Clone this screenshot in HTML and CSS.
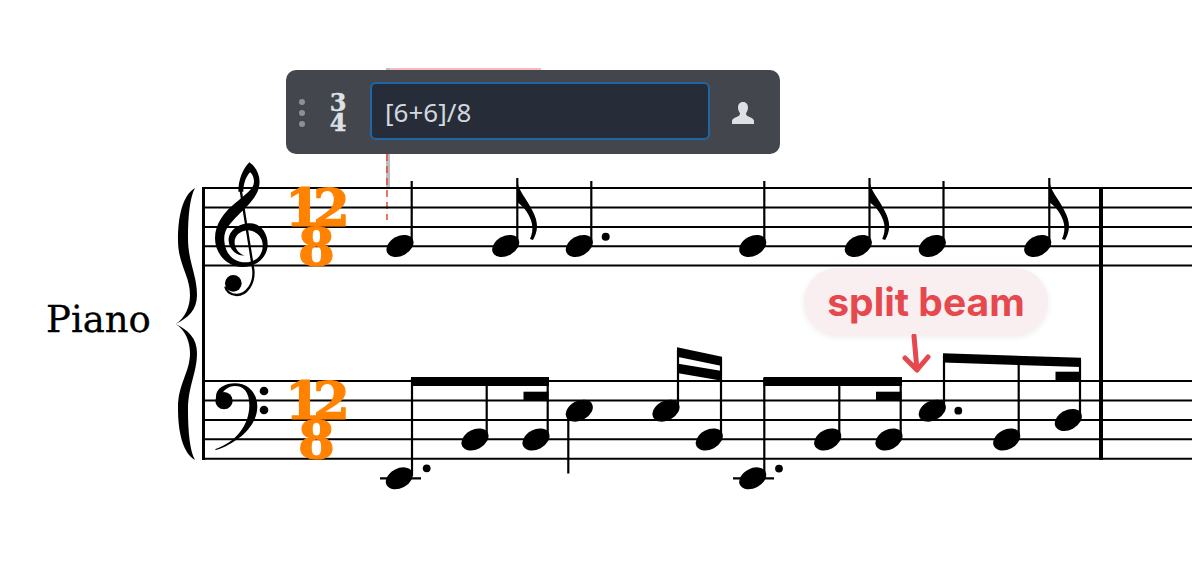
FILE: index.html
```html
<!DOCTYPE html>
<html lang="en">
<head>
    <meta charset="UTF-8">
    <meta name="viewport" content="width=device-width, initial-scale=1.0">
    <title>Time signature popover</title>
    <link rel="stylesheet" href="styles.css">
</head>
<body>
    <div class="stage">
        <svg class="score" viewBox="0 0 1192 578" width="1192" height="578">
            <defs>
                <ellipse id="head" rx="14.4" ry="9.8" transform="rotate(-28)"/>
                <path id="flag" d="M0,0 C1,8 2,10 6,17 C13,28 20,38 20,48 C20,54 18,58 16,62 L13,61 C15,56 16,52 15,46 C13,36 6,28 0,24 Z"/>
                <path id="brace-half" d="M195,188 C190,197 188,215 188,238 C188,262 197,275 197,295 C197,310 188,318 175.5,324 C186,318 190,305 190,295 C190,275 178,265 178,240 C178,215 183,195 195,188 Z"/>
            </defs>

            <!-- selection marker behind the popover -->
            <rect class="marker-pink" x="386" y="68" width="155" height="3"/>
            <rect class="marker-grey" x="386" y="68" width="4" height="119"/>
            <line class="marker-dash" x1="387" y1="154" x2="387" y2="220"/>

            <!-- staves -->
            <g class="staff">
                <line x1="203" y1="188" x2="1192" y2="188"/>
                <line x1="203" y1="207.6" x2="1192" y2="207.6"/>
                <line x1="203" y1="227" x2="1192" y2="227"/>
                <line x1="203" y1="246.3" x2="1192" y2="246.3"/>
                <line x1="203" y1="265.6" x2="1192" y2="265.6"/>
                <line x1="203" y1="381" x2="1192" y2="381"/>
                <line x1="203" y1="400.6" x2="1192" y2="400.6"/>
                <line x1="203" y1="420" x2="1192" y2="420"/>
                <line x1="203" y1="439.3" x2="1192" y2="439.3"/>
                <line x1="203" y1="458.8" x2="1192" y2="458.8"/>
            </g>
            <rect x="202" y="187" width="3" height="273"/>
            <rect x="1099" y="187" width="4" height="273"/>

            <!-- brace -->
            <use href="#brace-half"/>
            <use href="#brace-half" transform="matrix(1 0 0 -1 0 648)"/>

            <text class="instrument" x="46" y="332">Piano</text>

            <!-- treble clef -->
            <g transform="translate(170 155) scale(0.3333)">
                <path d="M238,22 C258,35 272,62 268,90 C264,125 232,152 205,180 C180,205 160,225 163,258 C165,295 190,322 225,322 C260,322 280,298 278,268 C276,240 252,225 232,226 C208,228 192,245 194,265 C196,285 210,298 224,302 C200,302 178,285 176,258 C174,228 205,205 240,205 C272,205 294,235 293,270 C292,308 258,336 218,336 C170,336 135,295 135,250 C135,205 165,170 195,145 C225,118 252,102 252,80 C252,65 245,55 240,52 C228,65 220,85 220,110 L205,110 C205,75 218,42 238,22 Z"/>
                <path class="clef-stem" d="M212,105 L250,345 C254,385 230,420 200,420 C180,420 168,408 166,395"/>
                <circle cx="190" cy="385" r="25"/>
            </g>

            <!-- bass clef -->
            <g transform="translate(160 310) scale(0.3333)">
                <path d="M165,418 C230,395 268,345 268,285 C268,245 250,228 225,228 C205,228 190,240 180,262 L168,265 C165,235 195,220 225,220 C265,220 292,250 292,290 C292,350 230,400 168,420 Z"/>
                <circle cx="192" cy="272" r="26"/>
                <circle cx="312" cy="243" r="13"/>
                <circle cx="312" cy="300" r="13"/>
            </g>

            <!-- time signatures -->
            <g class="timesig">
                <text class="tight" x="285" y="226">12</text>
                <text x="298" y="265">8</text>
                <text class="tight" x="285" y="419">12</text>
                <text x="298" y="458">8</text>
            </g>

            <!-- treble notes -->
            <g class="stems">
                <line x1="411.7" y1="181" x2="411.7" y2="243"/>
                <line x1="517.3" y1="178" x2="517.3" y2="243"/>
                <line x1="591.3" y1="181" x2="591.3" y2="243"/>
                <line x1="764.3" y1="181" x2="764.3" y2="243"/>
                <line x1="869.5" y1="178" x2="869.5" y2="243"/>
                <line x1="943.5" y1="181" x2="943.5" y2="243"/>
                <line x1="1049.3" y1="178" x2="1049.3" y2="243"/>
            </g>
            <use href="#head" x="400" y="246"/>
            <use href="#head" x="505.7" y="246"/>
            <use href="#head" x="579.3" y="246"/>
            <use href="#head" x="752.7" y="246"/>
            <use href="#head" x="858.3" y="246"/>
            <use href="#head" x="932.3" y="246"/>
            <use href="#head" x="1037.7" y="246"/>
            <use href="#flag" x="517" y="178"/>
            <use href="#flag" x="869.2" y="178"/>
            <use href="#flag" x="1049" y="178"/>
            <circle cx="605.7" cy="236.7" r="4"/>

            <!-- bass notes -->
            <g class="stems">
                <line x1="412" y1="378" x2="412" y2="476"/>
                <line x1="486.7" y1="380" x2="486.7" y2="437"/>
                <line x1="547.7" y1="380" x2="547.7" y2="437"/>
                <line x1="568.3" y1="410" x2="568.3" y2="473.5"/>
                <line x1="678" y1="350" x2="678" y2="408"/>
                <line x1="721" y1="358" x2="721" y2="437"/>
                <line x1="764.3" y1="378" x2="764.3" y2="475"/>
                <line x1="839.3" y1="380" x2="839.3" y2="437"/>
                <line x1="900.7" y1="380" x2="900.7" y2="437"/>
                <line x1="944" y1="355" x2="944" y2="408"/>
                <line x1="1018.7" y1="358" x2="1018.7" y2="437"/>
                <line x1="1080" y1="360" x2="1080" y2="417"/>
                <line x1="380" y1="478.4" x2="421" y2="478.4"/>
                <line x1="733" y1="478.4" x2="774" y2="478.4"/>
            </g>
            <use href="#head" x="399.3" y="478.3"/>
            <use href="#head" x="475" y="439.5"/>
            <use href="#head" x="536" y="439.5"/>
            <use href="#head" x="579.3" y="410.7"/>
            <use href="#head" x="666" y="410.7"/>
            <use href="#head" x="709.3" y="439.5"/>
            <use href="#head" x="752.7" y="478.3"/>
            <use href="#head" x="827.7" y="439.5"/>
            <use href="#head" x="889" y="439.5"/>
            <use href="#head" x="932.3" y="410.7"/>
            <use href="#head" x="1006.7" y="439.5"/>
            <use href="#head" x="1068.3" y="420"/>
            <circle cx="426.7" cy="468.3" r="3.9"/>
            <circle cx="779" cy="468.6" r="3.9"/>
            <circle cx="958.3" cy="410.7" r="3.9"/>

            <!-- beams -->
            <rect x="411" y="377" width="138" height="9"/>
            <rect x="523.5" y="391.7" width="25" height="8.5"/>
            <polygon points="677,347.3 722,356.7 722,366 677,356.8"/>
            <polygon points="677,363.5 722,371 722,380.7 677,373"/>
            <rect x="763.5" y="377" width="138.5" height="9"/>
            <rect x="876" y="391.7" width="25.5" height="8.5"/>
            <polygon points="943,353.3 1081,357.7 1081,367 943,362.6"/>
            <rect x="1055.5" y="371.7" width="25" height="8.5"/>
        </svg>

        <div class="toolbar">
            <div class="grip"><span></span><span></span><span></span></div>
            <div class="sig-icon"><span>3</span><span>4</span></div>
            <div class="sig-input">[6+6]/8</div>
            <svg class="person" viewBox="0 0 22 22" width="22" height="22">
                <path d="M11,0 C14.5,0 16,2.6 16,5.6 C16,8 15,10 14,11.2 C14,13 15,14 17.5,15 C20,16 22,17 22,19 L22,22 L0,22 L0,19 C0,17 2,16 4.5,15 C7,14 8,13 8,11.2 C7,10 6,8 6,5.6 C6,2.6 7.5,0 11,0 Z"/>
            </svg>
        </div>

        <div class="callout">split beam</div>
        <svg class="callout-arrow" viewBox="0 0 32 40" width="32" height="40">
            <path d="M14,2 L17,36 M5,24 L17,36 L28,23"/>
        </svg>
    </div>
</body>
</html>
```

FILE: styles.css
```css
html, body {
    margin: 0;
    background: #fff;
}

.stage {
    position: relative;
    width: 1192px;
    height: 578px;
    overflow: hidden;
}

.score {
    display: block;
}

/* Score parts */
.staff line {
    stroke: #000;
    stroke-width: 2;
}

.stems line {
    stroke: #000;
    stroke-width: 2.2;
}

.clef-stem {
    fill: none;
    stroke: #000;
    stroke-width: 7;
}

.instrument {
    font-family: "DejaVu Serif", serif;
    font-size: 37px;
    fill: #000;
    stroke: #000;
    stroke-width: 0.3;
}

.timesig text {
    font-family: "DejaVu Serif", serif;
    font-size: 53px;
    font-weight: 700;
    fill: #ff8200;
    stroke: #ff8200;
    stroke-width: 1.2;
}

.timesig .tight {
    letter-spacing: -9px;
}

.marker-pink {
    fill: #f9b9bd;
}

.marker-grey {
    fill: #bdbdbd;
}

.marker-dash {
    stroke: #e5482d;
    stroke-width: 1.5;
    stroke-dasharray: 7 5;
}

/* Popover over the score */
.toolbar {
    position: absolute;
    left: 286px;
    top: 70px;
    width: 494px;
    height: 84px;
    box-sizing: border-box;
    padding: 12px 26px 14px 12px;
    display: flex;
    align-items: center;
    background: #43464c;
    border-radius: 10px;
}

.grip {
    display: flex;
    flex-direction: column;
    gap: 5px;
    width: 8px;
    margin: 3px 0 0 1px;
}

.grip span {
    width: 6px;
    height: 6px;
    border-radius: 50%;
    background: #8d9095;
}

.sig-icon {
    display: flex;
    flex-direction: column;
    align-items: center;
    width: 20px;
    margin: 4px 0 0 21px;
    font-family: "DejaVu Serif", serif;
    font-size: 24px;
    font-weight: 700;
    line-height: 20px;
    color: #dde1e6;
    -webkit-text-stroke: 0.4px #dde1e6;
}

.sig-input {
    flex: 1;
    height: 58px;
    margin: 0 22px 0 22px;
    padding: 1px 0 0 13px;
    box-sizing: border-box;
    display: flex;
    align-items: center;
    background: #272d38;
    border: 2px solid #1f66a3;
    border-radius: 6px;
    font-family: "Noto Sans", sans-serif;
    font-size: 26px;
    color: #d3d8df;
}

.person {
    flex: none;
    margin-top: 4px;
    fill: #dde1e6;
}

/* Annotation */
.callout {
    position: absolute;
    left: 804px;
    top: 268px;
    width: 244px;
    height: 67px;
    display: flex;
    align-items: center;
    justify-content: center;
    background: #f9eff1;
    border-radius: 34px;
    box-shadow: 0 2px 6px rgba(0, 0, 0, 0.08);
    font-family: Inter, sans-serif;
    font-size: 39px;
    font-weight: 700;
    color: #e5484d;
}

.callout-arrow {
    position: absolute;
    left: 900px;
    top: 334px;
}

.callout-arrow path {
    fill: none;
    stroke: #e5484d;
    stroke-width: 5;
    stroke-linecap: round;
    stroke-linejoin: round;
}
```
